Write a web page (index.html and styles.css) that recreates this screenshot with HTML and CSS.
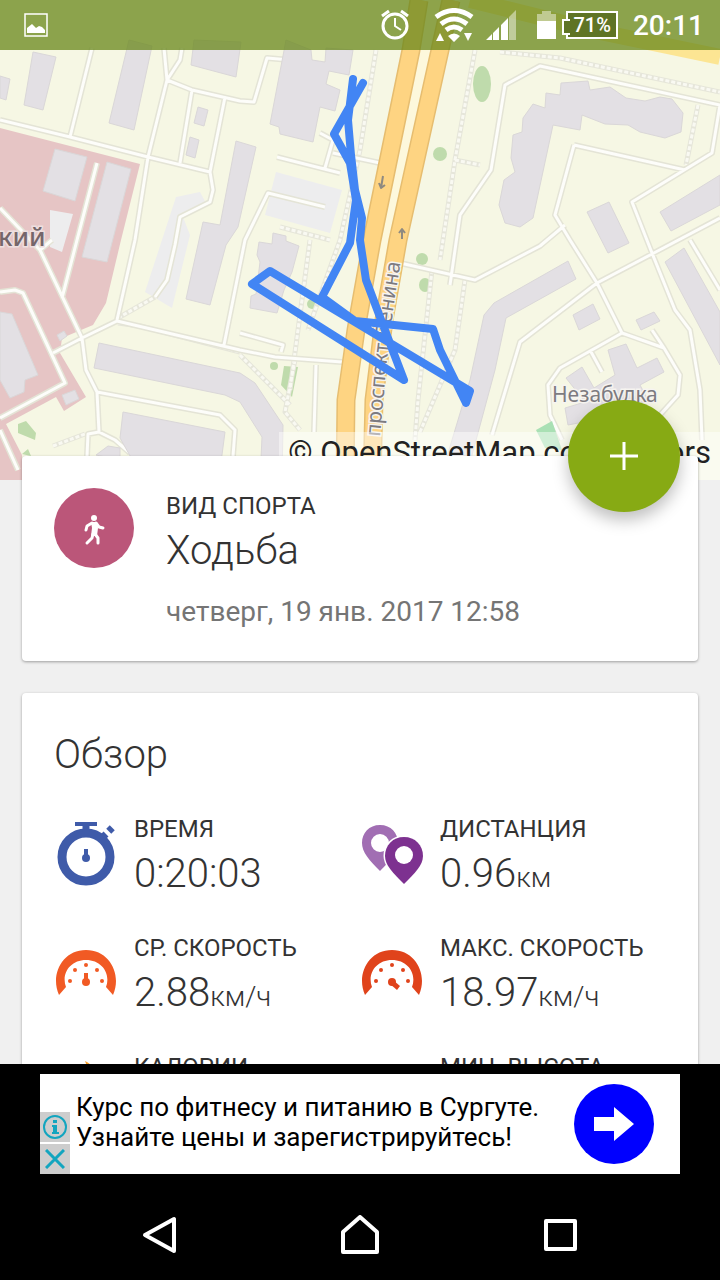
FILE: index.html
```
<!DOCTYPE html>
<html lang="ru">
<head>
    <meta charset="UTF-8">
    <meta name="viewport" content="width=device-width, initial-scale=1.0">
    <title>Ходьба</title>
    <link rel="stylesheet" href="styles.css">
</head>
<body>
    <header class="status">
        <svg class="icon" width="24" height="24" viewBox="0 0 24 24">
            <rect x="1" y="1" width="22" height="22" fill="none" stroke="#fff" stroke-width="1.5"/>
            <path fill="#fff" d="M3 20v-5l5-4 4 4 3-2 3 1 3 3v3z"/>
        </svg>
        <div class="statusRight">
            <svg class="alarm" width="30" height="32" viewBox="0 0 30 32">
                <g fill="none" stroke="#fff" stroke-width="3">
                    <circle cx="15" cy="17" r="12"/>
                    <path d="M2 7l7-5M28 7l-7-5"/>
                    <path stroke-width="2" d="M15 9v8l6 4"/>
                </g>
            </svg>
            <svg class="wifi" width="40" height="34" viewBox="0 0 40 34">
                <g fill="none" stroke="#fff" stroke-width="5">
                    <path d="M2 9q18-13 36 0M7 16q13-10 26 0M12 22q8-6 16 0"/>
                </g>
                <path fill="#fff" d="M14 28q6-5 12 0l-6 6zM2 33l4-8 4 8zM30 25h8l-4 8z"/>
            </svg>
            <svg class="signal" width="30" height="30" viewBox="0 0 30 30">
                <path fill="#fff" d="M0 30l6-6v6zM7 23l6-6v13H7zM15 15l7-7v22h-7z"/>
                <path fill="#fff" opacity=".45" d="M23 7l7-7v30h-7z"/>
            </svg>
            <svg class="battery" width="19" height="28" viewBox="0 0 19 28">
                <path fill="#fff" opacity=".45" d="M5 0h9v3h5v7H0V3h5z"/>
                <path fill="#fff" d="M0 10h19v18H0z"/>
            </svg>
            <span class="percent">71%</span>
            <span class="clock">20:11</span>
        </div>
    </header>

    <main class="content">
        <section class="map">
            <svg class="mapView" viewBox="0 0 720 480" preserveAspectRatio="xMidYMin slice">
                <defs>
                    <path id="streets" d="M0 120L70 137 148 157 210 172 213 190 210 202 180 217 175 245 167 280 155 297M92 48L70 137M164 48L167 80 148 157 135 240 117 320M182 48L180 60 167 80 192 90 240 101 254 102 267 58 290 60M192 90L180 163M225 97L210 172M53 353L82 338 117 321 240 350 275 357 342 362M40 250L82 338 86 370 97 392 99 432M97 392L220 415 235 430 233 456M99 432L88 434 87 456M99 432L115 440 130 453M0 292L15 290 23 293 65 383 0 418M0 430L18 470M0 208L40 250 52 240M97 163L62 298M277 157L340 173M325 168L333 140 320 133M333 153L380 163M325 207L268 193 245 240 224 345M240 333L283 345 281 352M316 365L314 432M450 285L460 215 491 170 505 85 540 66 720 105 712 153 632 202 652 253 675 310 690 330 700 390 702 440M574 145L685 170M574 145L555 215 570 240 597 283 622 333 664 348 680 375 678 395 660 415M400 263L475 280 540 246 565 225M720 218L652 254 597 283 520 342 492 435M622 333L560 368 548 385 550 415 562 440M590 350L602 372M652 330L664 348M690 240L720 290"/>
                    <path id="paths" d="M376 50L360 150 340 240 308 330M475 50L455 160 440 260M118 323L140 326 240 352M310 240L290 390M295 360L285 412 300 430M240 355L290 405M465 280L455 350 420 432M432 270L418 400 415 440M500 52L560 58 720 92M698 105L686 165M118 318L155 297M455 160L480 165M53 446L85 434M280 227L330 240"/>
                    <path id="left" d="M419 0L411 50 372 240 356 330 346 400 345 480"/>
                    <path id="right" d="M451 0L440 50 398 240 384 320 374 400 372 480"/>
                </defs>
                <rect class="land" width="720" height="480"/>
                <path class="campus" d="M0 128L140 164 121 240 106 303 93 325 62 338 60 353 86 397 64 411 56 397 6 424 22 455V480H0z"/>
                <g class="lot">
                    <path d="M176 197L200 192 207 205 183 217 190 235 172 308 145 292zM276 172L342 190 330 233 265 215zM50 210L73 214 62 252 50 247z"/>
                </g>
                <g class="green">
                    <ellipse cx="482" cy="84" rx="9" ry="18"/>
                    <circle cx="440" cy="154" r="7"/>
                    <circle cx="422" cy="259" r="6"/>
                    <ellipse cx="425" cy="285" rx="6" ry="7"/>
                    <circle cx="312" cy="304" r="5"/>
                    <circle cx="274" cy="366" r="4"/>
                    <path d="M284 366L298 367 292 397 281 385zM18 424L26 421 36 433 35 440 18 433zM22 454L28 449 31 456z"/>
                </g>
                <path class="avenue" d="M470 0L600 32 720 57"/>
                <use href="#paths" class="pathEdge"/>
                <use href="#paths" class="pathDots"/>
                <use href="#streets" class="streetEdge"/>
                <use href="#streets" class="street"/>
                <path class="pitch" d="M536 430L552 421 562 450 545 448z"/>
                <g class="building">
                    <path d="M33 52L56 57 43 110 24 105zM0 76L10 79 6 100 0 98zM129 40L152 46 134 130 109 123zM194 40L241 42 236 77 191 65zM198 107L208 110 204 126 194 123zM190 137L199 140 195 158 186 155z"/>
                    <path d="M55 149L87 157 75 201 43 191zM107 162L131 169 107 262 82 257zM236 141L256 147 238 227 226 245 210 305 186 299 203 222 220 225z"/>
                    <path d="M286 40L311 50 312 60 325 62 326 48 353 50 349 75 329 71 326 84 340 90 335 111 320 107 313 142 280 134 279 127 270 124z"/>
                    <path d="M273 233L286 236 286 241 299 246 292 272 284 290 277 313 250 308 251 296 256 294 260 262 257 255 259 242 272 244z"/>
                    <path d="M0 312L12 314 38 375 25 380 24 392 10 398 0 380zM99 343L240 373 255 383 283 425 282 480 260 480 262 437 240 402 225 395 94 368zM123 412L225 432 220 470H138L120 438zM96 455L108 446 120 448 120 460zM62 395L75 390 79 399 66 405zM57 335L64 331 67 336 60 341z"/>
                    <path d="M561 83L588 81 590 90 610 87 626 98 645 101 660 97 672 99 683 113 681 132 665 138 640 132 628 125 605 124 582 115 580 130 553 125 533 218 520 227 505 223 499 205 504 180 515 172 511 158 513 135 522 132 523 118 533 104 545 108 546 93 560 95z"/>
                    <path d="M587 212L609 202 629 243 608 253zM660 212L720 175V205L671 231zM568 261L576 279 506 318 495 370 468 470 446 460 470 380 484 315 494 303zM665 262L684 248 720 312V365zM573 315L593 304 600 319 579 330zM636 320L654 312 660 321 641 330z"/>
                    <path d="M608 350L626 344 637 368 657 358 664 372 640 385 648 400 620 415 568 425 565 408 585 402 566 378 582 367 594 388 615 375z"/>
                </g>
                <path class="median" d="M435 0L425 50 386 240 370 330 360 400 359 480"/>
                <use href="#left" class="roadEdge"/>
                <use href="#left" class="road"/>
                <use href="#right" class="roadEdge"/>
                <use href="#right" class="road"/>
                <path class="arrow" d="M383 176L381 188M379 183L381 188 385 185M402 239V229M399 233L402 229 405 233"/>
                <text class="place campusName" x="-2" y="246">кий</text>
                <text class="place" x="552" y="402">Незабудка</text>
                <path id="avenueLine" fill="none" d="M380 437L386 370 393 310 404 240"/>
                <text class="place"><textPath href="#avenueLine">проспект Ленина</textPath></text>
                <path class="track" d="M353 79L348 120 351 155 355 190 362 218 360 240 366 280 383 325 404 380 252 284 270 271 470 391 466 403 440 350 433 329 355 321 322 297 350 243 356 200 350 163 334 134 363 83"/>
            </svg>
            <a class="credit" href="#">© OpenStreetMap contributors</a>
        </section>

        <section class="card sport">
            <button class="fab" aria-label="Добавить">
                <svg width="28" height="28" viewBox="0 0 28 28"><path stroke="#fff" stroke-width="3" d="M14 0v28M0 14h28"/></svg>
            </button>
            <div class="sportIcon">
                <svg width="80" height="80" viewBox="0 0 80 80">
                    <circle cx="40" cy="30" r="3" fill="#fff"/>
                    <path fill="#fff" d="M37 34h6l1 6-1 8h-6l1-8z"/>
                    <path fill="none" stroke="#fff" stroke-width="3" stroke-linecap="round" stroke-linejoin="round" d="M38 35l-5 3-1 4M42 35l3 4 4 1M39 46l-1 4-5 5M41 46l3 4v5"/>
                </svg>
            </div>
            <div>
                <h2 class="label">ВИД СПОРТА</h2>
                <p class="value">Ходьба</p>
                <p class="date">четверг, 19 янв. 2017 12:58</p>
            </div>
        </section>

        <section class="card">
            <h1 class="title">Обзор</h1>
            <div class="stats">
                <div class="stat">
                    <svg class="statIcon" viewBox="0 0 64 64">
                        <g fill="none" stroke="#3f5ba9">
                            <circle cx="32" cy="35" r="24" stroke-width="9"/>
                            <path stroke-width="4" d="M21 2h22"/>
                            <path stroke-width="7" d="M32 3v7M49 15l3-3"/>
                            <path stroke-width="4" d="M32 27v10"/>
                            <path stroke-width="5" d="M54 5l5 5"/>
                        </g>
                        <circle cx="32" cy="36" r="4" fill="#3f5ba9"/>
                    </svg>
                    <div>
                        <h2 class="label">ВРЕМЯ</h2>
                        <p class="value">0:20:03</p>
                    </div>
                </div>
                <div class="stat">
                    <svg class="statIcon" viewBox="0 0 64 64">
                        <path fill="#a16eb3" fill-rule="evenodd" d="M20 3C9 3 2 11 2 21c0 9 7 17 18 28 11-11 18-19 18-28C38 11 31 3 20 3zm0 9a9 9 0 1 1 0 18 9 9 0 0 1 0-18z"/>
                        <path fill="#7d3190" stroke="#fff" stroke-width="3" paint-order="stroke" d="M44 15c-11 0-19 8-19 19 0 9 8 17 19 28 11-11 19-19 19-28 0-11-8-19-19-19z"/>
                        <circle cx="44" cy="33" r="9" fill="#fff"/>
                    </svg>
                    <div>
                        <h2 class="label">ДИСТАНЦИЯ</h2>
                        <p class="value">0.96<span class="unit">км</span></p>
                    </div>
                </div>
                <div class="stat">
                    <svg class="statIcon" viewBox="0 0 64 64">
                        <g fill="#f15a24">
                            <path d="M5 54C-4 34 8 9 32 9s36 25 27 45l-7-8C57 33 48 19 32 19S7 33 12 46z"/>
                            <circle cx="16" cy="40" r="2"/><circle cx="21" cy="29" r="2"/><circle cx="32" cy="24" r="2"/><circle cx="43" cy="29" r="2"/><circle cx="48" cy="40" r="2"/>
                            <circle cx="32" cy="41" r="4"/>
                            <path d="M30 32h4v9h-4z"/>
                        </g>
                    </svg>
                    <div>
                        <h2 class="label">СР. СКОРОСТЬ</h2>
                        <p class="value">2.88<span class="unit">км/ч</span></p>
                    </div>
                </div>
                <div class="stat">
                    <svg class="statIcon" viewBox="0 0 64 64">
                        <g fill="#e0431b">
                            <path d="M5 54C-4 34 8 9 32 9s36 25 27 45l-7-8C57 33 48 19 32 19S7 33 12 46z"/>
                            <circle cx="16" cy="40" r="2"/><circle cx="21" cy="29" r="2"/><circle cx="32" cy="24" r="2"/><circle cx="43" cy="29" r="2"/><circle cx="48" cy="40" r="2"/>
                            <circle cx="32" cy="41" r="4"/>
                            <path d="M33 39l7 6-3 4-7-6z"/>
                        </g>
                    </svg>
                    <div>
                        <h2 class="label">МАКС. СКОРОСТЬ</h2>
                        <p class="value">18.97<span class="unit">км/ч</span></p>
                    </div>
                </div>
                <div class="stat">
                    <svg class="statIcon" viewBox="0 0 64 64">
                        <path fill="#f7a02b" d="M31 1c8 4 17 13 17 29 6 18-4 32-16 32S10 50 16 34c4-9 22-17 15-33z"/>
                    </svg>
                    <h2 class="label">КАЛОРИИ</h2>
                </div>
                <div class="stat">
                    <svg class="statIcon" viewBox="0 0 64 64">
                        <path fill="#4caf50" d="M2 56l18-32 12 18 8-12 22 26z"/>
                    </svg>
                    <h2 class="label">МИН. ВЫСОТА</h2>
                </div>
            </div>
        </section>
    </main>

    <aside class="ad">
        <div class="adBox">
            <div class="adMarks">
                <button class="mark" aria-label="О рекламе">
                    <svg width="26" height="26" viewBox="0 0 26 26">
                        <circle cx="13" cy="13" r="11" fill="none" stroke="#12a5bf" stroke-width="2"/>
                        <path fill="#12a5bf" d="M11 6h4v3h-4zM10 11h5v7h2v2h-7v-2h1v-5h-1z"/>
                    </svg>
                </button>
                <button class="mark" aria-label="Закрыть">
                    <svg width="20" height="20" viewBox="0 0 20 20"><path stroke="#12a5bf" stroke-width="3" d="M1 1l18 18M19 1L1 19"/></svg>
                </button>
            </div>
            <p class="adText">Курс по фитнесу и питанию в Сургуте. Узнайте цены и зарегистрируйтесь!</p>
            <button class="adGo" aria-label="Перейти">
                <svg width="40" height="34" viewBox="0 0 40 34"><path fill="#fff" d="M0 10h20V0l20 17-20 17V24H0z"/></svg>
            </button>
        </div>
    </aside>

    <nav class="nav">
        <button aria-label="Назад">
            <svg width="40" height="40" viewBox="0 0 40 40"><path d="M5 20L34 4v32z"/></svg>
        </button>
        <button aria-label="Домой">
            <svg width="40" height="40" viewBox="0 0 40 40"><path d="M3 37V17L20 2l17 15v20z"/></svg>
        </button>
        <button aria-label="Недавние">
            <svg width="40" height="40" viewBox="0 0 40 40"><path d="M6 6h29v28H6z"/></svg>
        </button>
    </nav>
</body>
</html>
```

FILE: styles.css
```
*{
    box-sizing: border-box;
}
body{
    margin: 0;
    height: 100vh;
    display: flex;
    flex-direction: column;
    position: relative;
    background: #f0f0f0;
    color: #333;
    font-family: Roboto, "Noto Sans", sans-serif;
}
h1, h2, p{
    margin: 0;
    font-weight: 400;
}
button{
    border: 0;
    padding: 0;
    background: none;
    display: flex;
    align-items: center;
    justify-content: center;
    cursor: pointer;
}
svg{
    display: block;
    flex: none;
}

/* status bar, lies over the map */
.status{
    position: absolute;
    top: 0; left: 0; right: 0;
    z-index: 2;
    height: 50px;
    padding: 0 16px 0 24px;
    display: flex;
    align-items: center;
    justify-content: space-between;
    background: rgba(104, 135, 25, .75);
    color: #fff;
    font-weight: 500;
}
.statusRight{
    display: flex;
    align-items: center;
}
.wifi{
    margin-left: 24px;
}
.signal{
    margin-left: 12px;
}
.battery{
    margin: 0 6px 0 21px;
}
.percent{
    position: relative;
    height: 28px;
    margin-left: 4px;
    padding: 0 5px;
    border: 2px solid #fff;
    background: #5f7425;
    font-size: 20px;
    line-height: 24px;
}
.percent::before{
    content: "";
    position: absolute;
    left: -6px; top: 6px;
    width: 6px; height: 12px;
    border: 2px solid #fff;
    border-right: 0;
    background: #5f7425;
}
.clock{
    margin-left: 15px;
    font-size: 28px;
}

.content{
    flex: 1;
    min-height: 0;
    overflow: hidden;
}

/* map */
.map{
    position: relative;
    height: 480px;
}
.mapView{
    width: 100%;
    height: 100%;
}
.land{ fill: #f6f7e4; }
.campus{ fill: #e6c5c5; }
.lot{ fill: #ededee; }
.green{ fill: #bfdbac; }
.pitch{ fill: #a9e0b4; }
.building{ fill: #e3e0e4; stroke: #dad7d8; }
.streetEdge, .street, .pathEdge, .pathDots, .avenue, .median, .roadEdge, .road, .track, .arrow{
    fill: none;
    stroke-linejoin: round;
}
.streetEdge{ stroke: #e4e4d6; stroke-width: 6; }
.street{ stroke: #fdfdfa; stroke-width: 3; }
.pathEdge{ stroke: #e6e6da; stroke-width: 5; }
.pathDots{ stroke: #f9f9f2; stroke-width: 3; stroke-dasharray: 4 2; }
.avenue{ stroke: #fce593; stroke-width: 16; }
.median{ stroke: #fdf8dc; stroke-width: 16; }
.roadEdge{ stroke: #e6bd70; stroke-width: 19; }
.road{ stroke: #fed482; stroke-width: 16; }
.arrow{ stroke: #8f8a80; stroke-width: 2; }
.track{
    stroke: #4285f4;
    stroke-width: 8;
    stroke-linecap: round;
}
.place{
    font-family: "Noto Sans", sans-serif;
    font-size: 21px;
    fill: #7d7b80;
    stroke: #f6f4f0;
    stroke-width: 3;
    paint-order: stroke;
}
.campusName{
    font-size: 26px;
    font-weight: 500;
    fill: #75666a;
    stroke: #eedfdf;
}
.credit{
    position: absolute;
    right: 0; bottom: 0;
    height: 48px;
    padding: 0 9px;
    background: rgba(255, 255, 255, .45);
    color: #222;
    font-size: 31px;
    line-height: 42px;
    text-decoration: none;
    white-space: nowrap;
}

/* cards */
.card{
    position: relative;
    margin: 0 22px 32px;
    padding: 32px;
    background: #fff;
    border-radius: 4px;
    box-shadow: 0 1px 3px rgba(0, 0, 0, .35);
}
.sport{
    display: flex;
    gap: 32px;
    margin-top: -24px;
}
.fab{
    position: absolute;
    top: -56px; right: 18px;
    width: 112px;
    height: 112px;
    border-radius: 50%;
    background: #87aa14;
    box-shadow: 0 8px 16px rgba(0, 0, 0, .25);
}
.sportIcon{
    width: 80px;
    height: 80px;
    border-radius: 50%;
    background: #bb5679;
}
.label{
    font-size: 24px;
    line-height: 36px;
}
.value{
    font-size: 40px;
    font-weight: 300;
    line-height: 54px;
}
.unit{
    font-size: 28px;
    line-height: 28px;
}
.date{
    margin-top: 16px;
    color: #757575;
    font-size: 28px;
    line-height: 35px;
}
.title{
    margin-bottom: 26px;
    font-size: 40px;
    font-weight: 300;
    line-height: 60px;
}
.stats{
    display: grid;
    grid-template-columns: 1fr 1fr;
    row-gap: 29px;
}
.stat{
    display: flex;
    align-items: flex-start;
    gap: 16px;
}
.statIcon{
    width: 64px;
    height: 64px;
    margin-top: 11px;
}

/* ad banner */
.ad{
    position: relative;
    padding: 10px 40px 16px;
    background: #000;
}
.adBox{
    display: flex;
    align-items: center;
    min-height: 100px;
    padding-right: 26px;
    background: #fff;
    color: #000;
}
.adMarks{
    align-self: flex-end;
    display: grid;
    gap: 2px;
}
.mark{
    width: 30px;
    height: 30px;
    background: #cdcdcd;
}
.adText{
    flex: 1;
    padding: 0 16px 4px 6px;
    font-size: 26px;
    line-height: 30px;
}
.adGo{
    width: 80px;
    height: 80px;
    border-radius: 50%;
    background: #00f;
}

/* system buttons */
.nav{
    display: grid;
    grid-template-columns: 1fr 1fr 1fr;
    height: 90px;
    padding: 0 60px;
    background: #000;
}
.nav path{
    fill: none;
    stroke: #fff;
    stroke-width: 4;
    stroke-linejoin: round;
}
```
